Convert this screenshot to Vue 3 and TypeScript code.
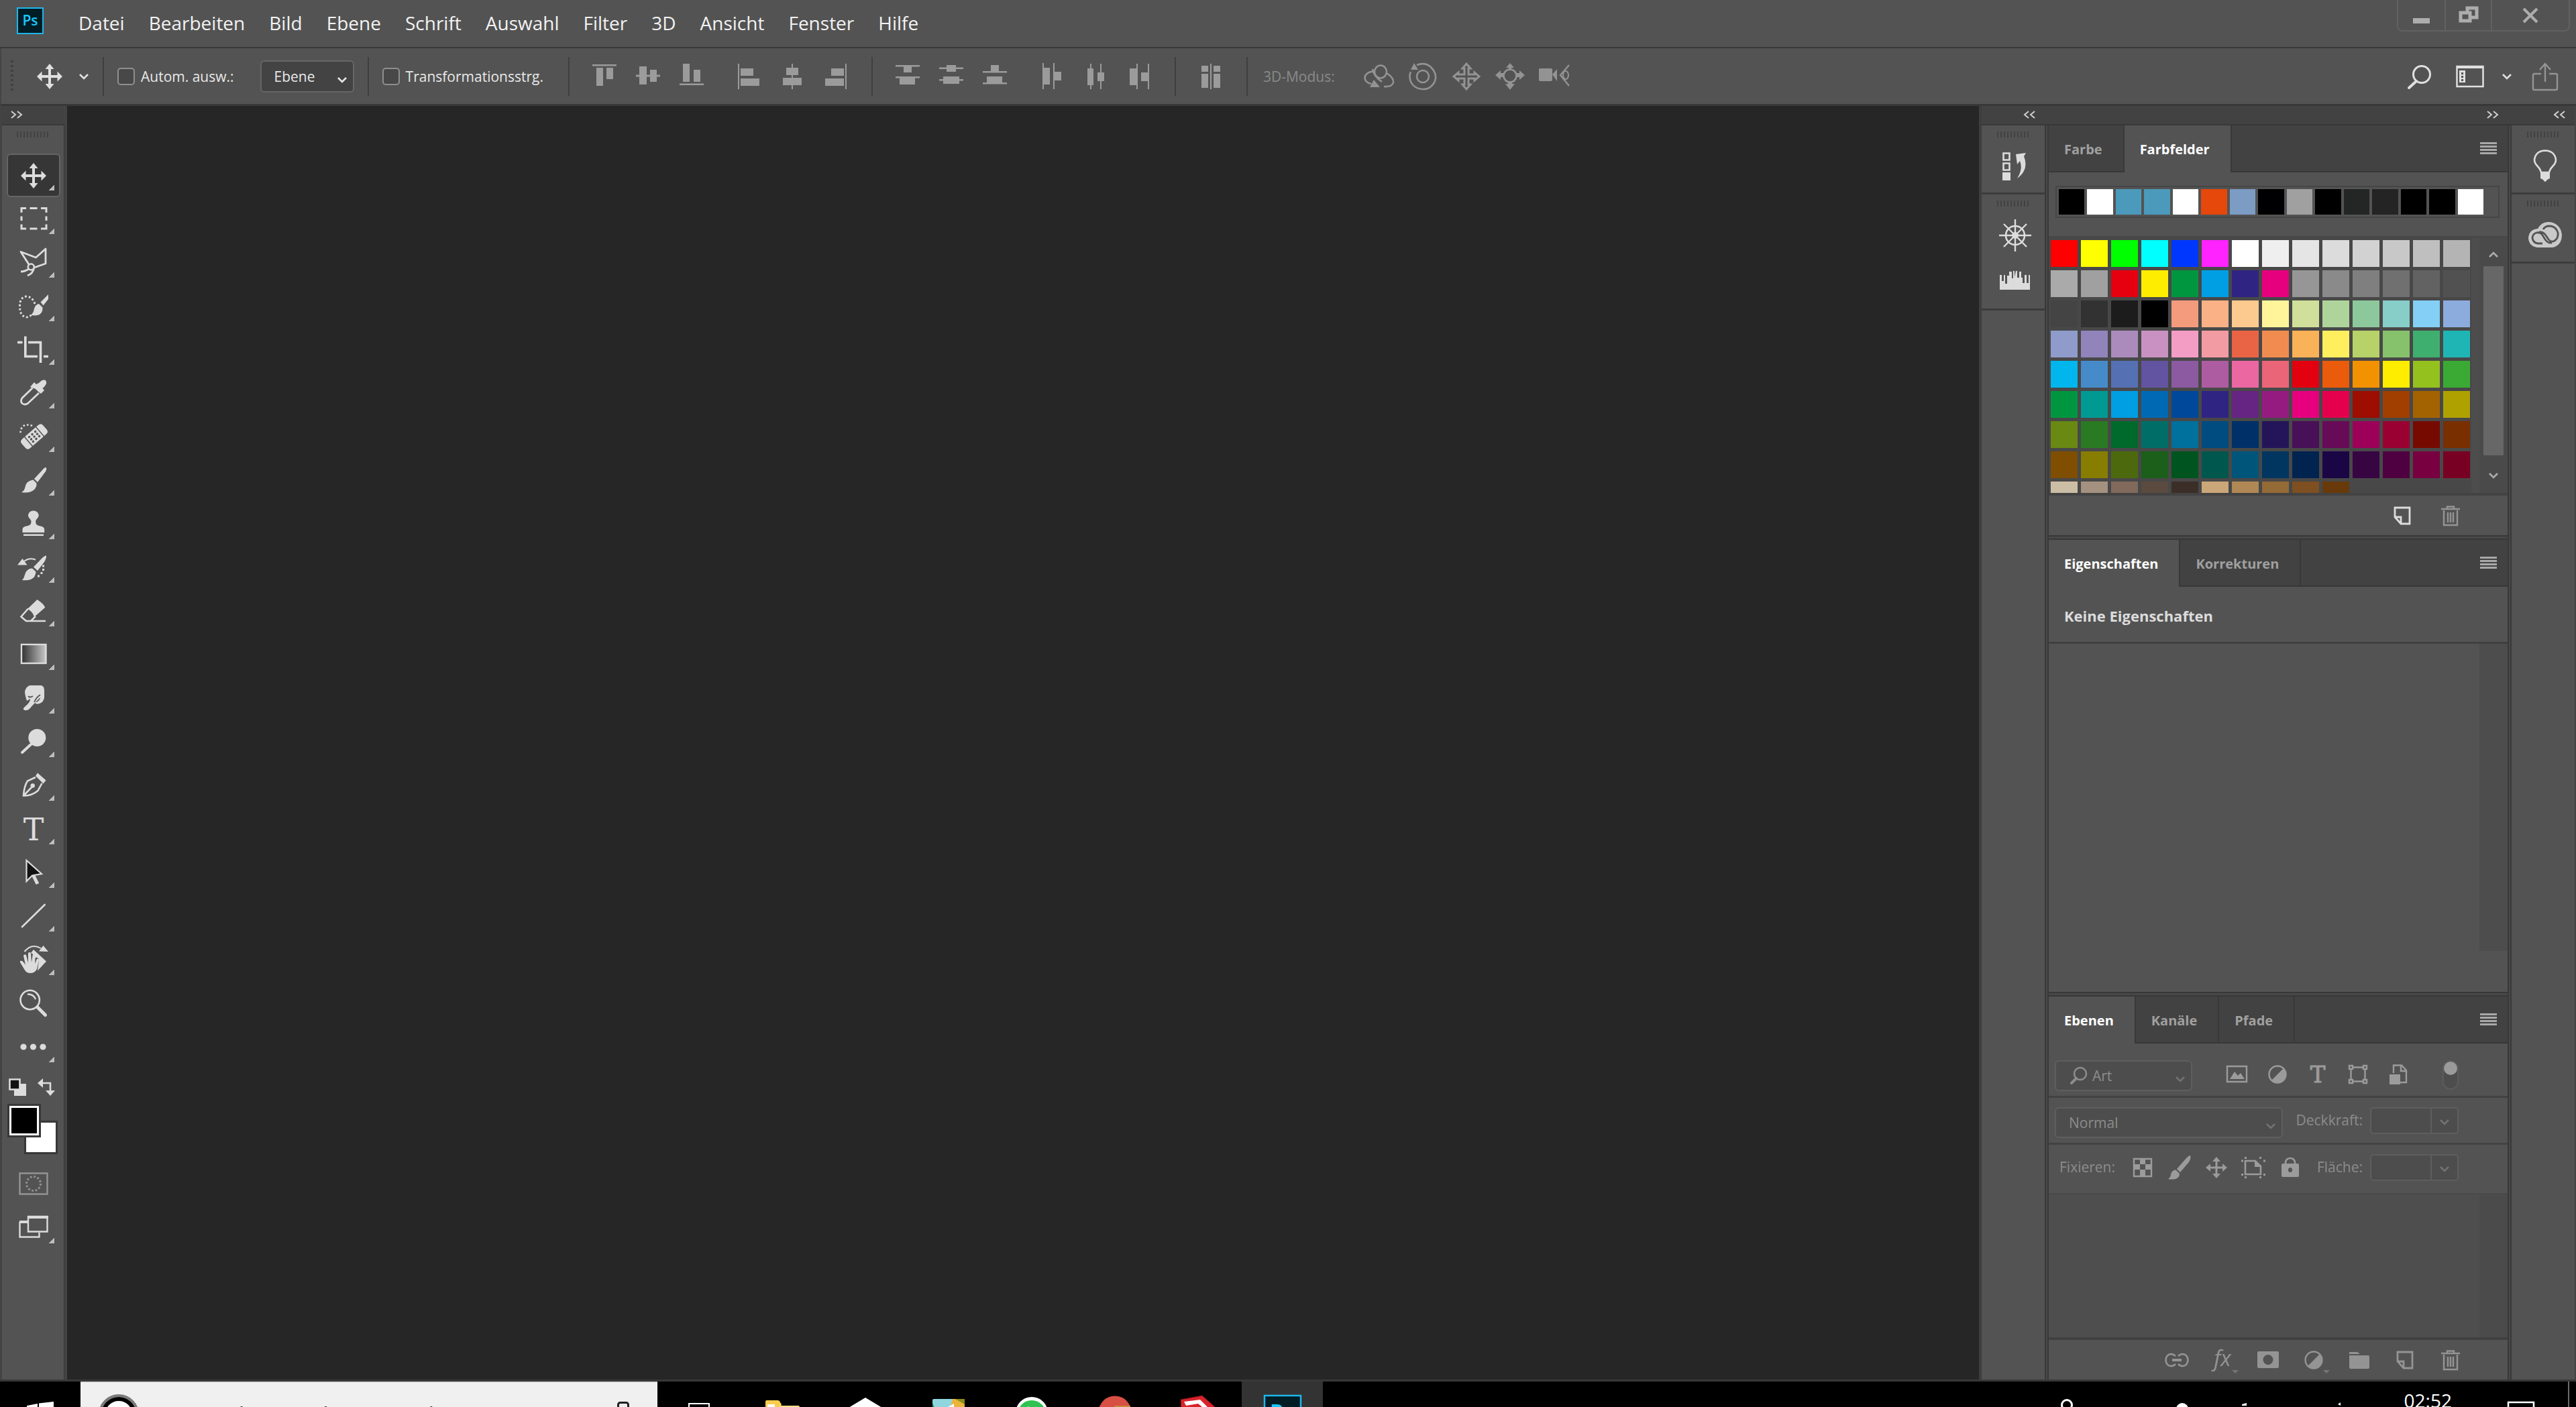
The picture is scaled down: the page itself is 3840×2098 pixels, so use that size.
<script setup lang="ts">
import { ref } from 'vue'

interface Tool {
  id: string
  label: string
  art: string
  more: boolean
}

interface Glyph {
  label: string
  w: number
  h: number
  art: string
  more?: boolean
}

const menus = ['Datei', 'Bearbeiten', 'Bild', 'Ebene', 'Schrift', 'Auswahl', 'Filter', '3D', 'Ansicht', 'Fenster', 'Hilfe']

const cross = '<path d="M25 3l6.500 8h-4.500v9h9.500v-5.500l7.500 7.500-7.500 7.500v-5.500h-9.500v9h4.500l-6.500 8-6.500-8h4.500v-9h-9.500v5.500l-7.500-7.500 7.500-7.500v5.500h9.500v-9h-4.500z" fill="currentColor"/>'
const brush = '<path d="M43.700 2Q45 4 43 8L31 24 26 19 38 6Q41 2 43.700 2zM24.500 20.500L29.500 25.500Q30 32 25 36 18 41 7 39 12 36 12.500 31 14 22 24.500 20.500z" fill="currentColor"/>'

const tools: Tool[] = [
  { id: 'move', label: 'Verschieben', more: true, art: cross },
  { id: 'marquee', label: 'Auswahlrechteck', more: true, art: '<path d="M7 12V5.500h7M19.500 5.500h11M36 5.500h8V12M44 17.500v6.500M44 29.500V36h-8M30.500 36h-11M14 36H7v-6.500M7 24v-6.500" fill="none" stroke="currentColor" stroke-width="3"/>' },
  { id: 'lasso', label: 'Polygon-Lasso', more: true, art: '<path d="M18.500 25L6 5.500 28.500 14 43 1V23L26 29M18 31Q12 35 6 35M25.500 30Q24 38 16 41" fill="none" stroke="currentColor" stroke-width="2.800" stroke-linejoin="round"/><ellipse cx="21.300" cy="28" rx="4.500" ry="4.500" fill="none" stroke="currentColor" stroke-width="2.600"/>' },
  { id: 'quick', label: 'Schnellauswahl', more: true, art: '<path d="M27 18Q23 7 14 7 4.500 8 4.500 22 4.500 36 14 38 19 38 22 34" fill="none" stroke="currentColor" stroke-width="3" stroke-dasharray="2.800 3"/><path d="M47 4V11L39.500 20.500 35.500 15.500zM33 18L38.500 23.500Q39 33 31 35 26 36 21 34.500 25 32 25.500 27 27 19 33 18z" fill="currentColor"/>' },
  { id: 'crop', label: 'Freistellen', more: true, art: '<path d="M1 10.500h7.500M12.800 1.500V31.500H31M17 10.500H35.500V41M40 31.500h7" fill="none" stroke="currentColor" stroke-width="3.600"/>' },
  { id: 'dropper', label: 'Pipette', more: true, art: '<path d="M33 6Q40-1 43.500 3 46 8 38.500 14L41 17 36 22 32 19 28 15 20 12 26 5 29 8z" fill="currentColor"/><path d="M23.500 13.500L8 28.500Q5 33 8 36.500 12 39.500 16.500 36.500L33 21" fill="none" stroke="currentColor" stroke-width="2.800"/>' },
  { id: 'heal', label: 'Bereichsreparatur', more: true, art: '<path d="M23 5Q17 2 10 5 5 9 5.500 18" fill="none" stroke="currentColor" stroke-width="2.600" stroke-dasharray="2.600 3"/><g transform="rotate(-41 26 21)"><path d="M5 17q0-5 5-5h4v18h-4q-5 0-5-5zM47 17q0-5-5-5h-4v18h4q5 0 5-5zM15.500 12h21v18h-21z" fill="currentColor"/><path d="M20 16.500h.1M26 16.500h.1M32 16.500h.1M20 21h.1M26 21h.1M32 21h.1M20 25.500h.1M26 25.500h.1M32 25.500h.1" stroke="#535353" stroke-width="3.400" stroke-linecap="round"/></g>' },
  { id: 'brush', label: 'Pinsel', more: true, art: brush },
  { id: 'stamp', label: 'Kopierstempel', more: true, art: '<path d="M24.700 1.500c5 0 8 3.500 8 7 0 4-4.500 5.500-4.500 9 0 4 1.500 5.500 5 6.500 5 1 8 2 8 6v4H8.500v-4c0-4 3-5 8-6 3.500-1 5-2.500 5-6.500 0-3.500-4.500-5-4.500-9 0-3.500 3-7 7.700-7zM10 36.500h30V39H10z" fill="currentColor"/>' },
  { id: 'history', label: 'Protokollpinsel', more: true, art: '<path d="M43.700 3.500Q45 6 41 13L31 26 25 20.500 36 9Q41 3.500 43.700 3.500zM23 22.500L28.500 27.500Q28 36 21 39 15 41 8 40 11 37 12 32 14 23 23 22.500zM1 17.500L8.500 8 15.500 17.500z" fill="currentColor"/><path d="M11 12Q18 6 28 9.500" fill="none" stroke="currentColor" stroke-width="2"/><path d="M31 34h3M35.500 29.500h3M38 24.500h3M38 19h3" stroke="currentColor" stroke-width="3"/>' },
  { id: 'eraser', label: 'Radiergummi', more: true, art: '<path d="M30.500 4Q42 12 42 16L26 30Q24 22 16 18z" fill="currentColor"/><path d="M17 17.500L6.500 29.500 14 36H43M14 36H21L28 29" fill="none" stroke="currentColor" stroke-width="2.600"/>' },
  { id: 'gradient', label: 'Verlauf', more: true, art: '<defs><linearGradient id="ramp"><stop offset="0" stop-color="#303030"/><stop offset="1" stop-color="#c8c8c8"/></linearGradient></defs><rect x="7" y="6" width="36.500" height="28" fill="url(#ramp)" stroke="currentColor" stroke-width="2.400"/>' },
  { id: 'smudge', label: 'Wischfinger', more: true, art: '<path d="M20 2H36Q41 3 41 9V20Q40 27 34 29 29 31 27 28 35 25 35 20 24 31 19 37 14 41 10 38 9 36 14 32 20 27 20 22L15 25Q11 13 12.500 9 15 3 20 2z" fill="currentColor"/><path d="M35 16Q29 20 26 27M24 18Q19 21 17 18" fill="none" stroke="#535353" stroke-width="1.800"/>' },
  { id: 'dodge', label: 'Abwedler', more: true, art: '<ellipse cx="30.300" cy="15" rx="13" ry="13" fill="currentColor"/><path d="M21 25L8 37" stroke="currentColor" stroke-width="4" stroke-linecap="round"/>' },
  { id: 'pen', label: 'Zeichenstift', more: true, art: '<path d="M31 2.500L43.500 13.500 39.500 18.500 28 7z" fill="currentColor"/><path d="M28 9L16 14.500Q11 22 10 36.500 22 37 31.500 29L37.500 18M10 36.500L23 23" fill="none" stroke="currentColor" stroke-width="2.600"/><circle cx="23.700" cy="21.500" r="3.200" fill="currentColor"/>' },
  { id: 'type', label: 'Text', more: true, art: '<text x="25" y="38" text-anchor="middle" font-family="DejaVu Serif" font-size="46" fill="currentColor">T</text>' },
  { id: 'select', label: 'Pfadauswahl', more: true, art: '<path d="M24.500 25L31 38" stroke="currentColor" stroke-width="5"/><path d="M14.500 3V34L23 25.500 37 23z" fill="#111" stroke="currentColor" stroke-width="2.200"/>' },
  { id: 'line', label: 'Linienzeichner', more: true, art: '<path d="M41.700 4L8 37" stroke="currentColor" stroke-width="2.600" stroke-linecap="round"/>' },
  { id: 'rotate', label: 'Ansichtdrehung', more: true, art: '<path d="M11.500 9Q22-4 36 4" fill="none" stroke="currentColor" stroke-width="2"/><path d="M33 8.500L47 9 39.500 0zM25 6L44 23.500 31 37.500Q32 30 33 21 32 17 27 18L25 13 21 11z" fill="currentColor"/><path d="M5 23Q8 21 11 26L13 29 10 15Q11 12 14 14L17 26V11Q19 9 21 11L22 25 24 12Q26 10 28 13L27 27 30 20Q33 18 33 22L30 35Q27 41 20 41 14 41 11 35L5 25z" fill="currentColor"/>' },
  { id: 'zoom', label: 'Zoom', more: false, art: '<circle cx="19.700" cy="16" r="14.200" fill="none" stroke="currentColor" stroke-width="2.600"/><path d="M16 7.500Q25 7 28 15" fill="none" stroke="currentColor" stroke-width="2.400"/><path d="M31 27L42.500 38.500" stroke="currentColor" stroke-width="5" stroke-linecap="round"/>' },
  { id: 'more', label: 'Symbolleiste bearbeiten', more: true, art: '<circle cx="10" cy="21" r="4.600" fill="currentColor"/><circle cx="24.500" cy="21" r="4.600" fill="currentColor"/><circle cx="39" cy="21" r="4.600" fill="currentColor"/>' },
]
const activeTool = ref('move')

// Each arrangement group sits between two separators in the options bar.
const alignTop: Glyph[] = [
  { label: 'Obere Kanten', w: 36, h: 40, art: '<path d="M0 2h36v2.500H0zM6 7h10v27H6zM21 7h10v17H21z"/>' },
  { label: 'Vertikale Mitten', w: 36, h: 40, art: '<path d="M5 5h11v27H5zM21 10h10v18H21zM0 17.500h36v3H0z"/>' },
  { label: 'Untere Kanten', w: 36, h: 40, art: '<path d="M5 1h10v27H5zM21 10h10v18H21zM0 30.500h36V33H0z"/>' },
]
const alignLeft: Glyph[] = [
  { label: 'Linke Kanten', w: 34, h: 40, art: '<path d="M1 1h2v38H1zM5 8h19v11H5zM5 23h28v11H5z"/>' },
  { label: 'Horizontale Mitten', w: 34, h: 40, art: '<path d="M16 1h2v38h-2zM8 7h18v11H8zM3 22h28v11H3z"/>' },
  { label: 'Rechte Kanten', w: 34, h: 40, art: '<path d="M31 1h2v38h-2zM10 8h19v11H10zM1 23h28v11H1z"/>' },
]
const spreadRows: Glyph[] = [
  { label: 'Obere Kanten verteilen', w: 36, h: 40, art: '<path d="M0 1h36v2.500H0zM12 3h12v9H12zM0 18h36v2.500H0zM6 20h23v10H6z" transform="translate(0 2)"/>' },
  { label: 'Vertikale Mitten verteilen', w: 36, h: 40, art: '<path d="M0 6.500h36V9H0zM11 3h14v10H11zM0 24h36v2.500H0zM6 20h24v11H6z"/>' },
  { label: 'Untere Kanten verteilen', w: 36, h: 40, art: '<path d="M0 12h36v2.500H0zM12 3h12v9H12zM0 29h36v2.500H0zM6 20h23v10H6z"/>' },
]
const spreadCols: Glyph[] = [
  { label: 'Linke Kanten verteilen', w: 30, h: 40, art: '<path d="M1 0h2v39H1zM3 7h9v25H3zM17 0h2v39h-2zM19 13h10v13H19z"/>' },
  { label: 'Horizontale Mitten verteilen', w: 30, h: 40, art: '<path d="M7 1h2v38H7zM3 8h9v25H3zM22 1h2v38h-2zM18 14h10v13H18z"/>' },
  { label: 'Rechte Kanten verteilen', w: 30, h: 40, art: '<path d="M11 1h2v38h-2zM1 8h10v25H1zM28 1h2v38h-2zM18 14h10v13H18z"/>' },
]
const spreadAuto: Glyph[] = [
  { label: 'Ebenen ausrichten', w: 30, h: 40, art: '<path d="M1 4h10v9H1zM19 4h10v9H19zM1 16h10v21H1zM19 16h10v21H19zM14 1h2v38h-2z"/>' },
]
const modes3d: Glyph[] = [
  { label: '3D-Drehen', w: 46, h: 40, art: '<ellipse cx="25" cy="13" rx="9" ry="9.500" fill="none" stroke="currentColor" stroke-width="2.600"/><path d="M15 12Q2 14 1.500 22 2 29 11 31M34 15Q45 22 44 29 42 36 30 35M13 9Q15 20 27 28" fill="none" stroke="currentColor" stroke-width="2.600"/><path d="M9 36h15L15 25z"/>' },
  { label: '3D-Rollen', w: 42, h: 42, art: '<circle cx="21" cy="21" r="9" fill="none" stroke="currentColor" stroke-width="2.600"/><path d="M12 4Q24-1 33 7 43 17 39 28 33 41 20 40 8 39 3 29 0 20 3 14" fill="none" stroke="currentColor" stroke-width="2.600"/><path d="M3 11L14 11 8 1z"/>' },
  { label: '3D-Ziehen', w: 42, h: 42, art: '<path d="M21 2l6 7h-3v9h9v-3l7 6-7 6v-3h-9v9h3l-6 7-6-7h3v-9H9v3l-7-6 7-6v3h9V9h-3z" fill="none" stroke="currentColor" stroke-width="3"/>' },
  { label: '3D-Gleiten', w: 44, h: 42, art: '<circle cx="22" cy="20" r="9.500" fill="none" stroke="currentColor" stroke-width="2.600"/><path d="M22 1l6 7h-4v4h-4V8h-4zM22 41l-7-9h4v-4h6v4h4zM0 19l8-7v4h4v6H8v4zM44 19l-8-7v4h-4v6h4v4z"/>' },
  { label: '3D-Kamera', w: 46, h: 40, art: '<path d="M1 9q0-1 2-1h16q2 0 2 2v15q0 2-2 2H3q-2 0-2-2zM21 17l7-8v18z"/><path d="M46 3L33 18 46 34" fill="none" stroke="currentColor" stroke-width="2.400"/><ellipse cx="41" cy="18" rx="4" ry="6" fill="none" stroke="currentColor" stroke-width="2"/>' },
]

const recent = ['#000000', '#ffffff', '#4c9abb', '#4c9abb', '#ffffff', '#e6470b', '#7d9cc4', '#000003', '#a0a0a0', '#000000', '#242625', '#242424', '#000000', '#000000', '#ffffff']
const swatches = `
ff0000 ffff00 00ff00 00ffff 0037ff ff23ff ffffff efefef e5e5e5 dcdcdc d2d2d2 c8c8c8 bfbfbf b4b4b4
aaaaaa a0a0a0 e6000f ffed00 009640 009fe3 302482 e6007e 969696 8a8a8a 7f7f7f 707070 626262 515151
444444 323232 1c1c1c 000000 f49a7d f9b185 fcca8e fff49a d0e09a aed49c 8dc79c 87cdc8 83cff5 8cacdd
8e9bcb 9084bb ab8bbc c891c1 f39dc4 f39ba2 e96445 f18c50 f9b257 ffef5f b6d268 86c26c 3faf6f 1fb5b4
00b6ed 468bc9 5670b4 6254a0 8b5aa0 ad5ca1 eb67a1 ea6577 e3000f ea5b0c f39200 ffed00 95c11f 3aaa35
009640 009a93 009ee3 0069b4 00489a 302483 662483 951b81 e6007e e5004d 9d0d00 a03f00 a36300 aea100
698912 297a22 006a2c 006e66 00709d 004b80 003068 241559 481057 670b58 9d0059 9b0033 770a00 7a2f00
7f4e00 877d00 4c6a0d 1b5f1a 00541f 00574d 00557a 00365f 002350 1b0645 370542 4f0041 780040 780023
ccbda5 a4917f 816a5b 5b4a40 3b2e28 cba678 b08855 946a36 7e4f20 683a0a`.trim().split(/\s+/)

const kinds: Glyph[] = [
  { label: 'Pixelebenen', w: 32, h: 28, art: '<path d="M1 2h29v23H1z" fill="none" stroke="currentColor" stroke-width="2.400"/><path d="M5 21l7-11 5 6 4-4 6 9z"/>' },
  { label: 'Einstellungsebenen', w: 28, h: 28, art: '<circle cx="14" cy="14" r="12.500" fill="none" stroke="currentColor" stroke-width="2.400"/><path d="M23 5A12.500 12.500 0 0 1 5 23z"/>' },
  { label: 'Textebenen', w: 32, h: 30, art: '<text x="16" y="27" text-anchor="middle" font-family="DejaVu Serif" font-size="34" stroke="currentColor">T</text>' },
  { label: 'Formebenen', w: 30, h: 30, art: '<path d="M2 2h5v5H2zM23 2h5v5h-5zM2 23h5v5H2zM23 23h5v5h-5zM7 4.500h16M7 25.500h16M4.500 7v16M25.500 7v16" fill="none" stroke="currentColor" stroke-width="2.400"/>' },
  { label: 'Smartobjekte', w: 28, h: 32, art: '<path d="M7 14V2.500h12l7 7.500v18h-9M18 3v8h8" fill="none" stroke="currentColor" stroke-width="2.400"/><path d="M1 16h16v15H1z"/>' },
]
const locks: Glyph[] = [
  { label: 'Transparente Pixel', w: 30, h: 30, art: '<path d="M2 2h26v26H2z" fill="none" stroke="currentColor" stroke-width="2.400"/><path d="M11 2h8v8h-8zM2 10h9v8H2zM19 10h9v8h-9zM11 18h8v10h-8z"/>' },
  { label: 'Bildpixel', w: 34, h: 36, art: '<path d="M33 0Q35 4 30 11L18 25 13 20 27 4Q31 0 33 0zM11.500 21.500L17 27Q17 33 11 35 5 36 0 35 4 32 4 28 6 21 11.500 21.500z"/>' },
  { label: 'Position', w: 34, h: 34, art: '<path d="M17 1l6 7h-4.500v7.500H26V11l7 6-7 6v-4.500h-7.500V26H23l-6 7-6-7h4.500v-7.500H8V23l-7-6 7-6v4.500h7.500V8H11z"/>' },
  { label: 'Zeichenfläche', w: 36, h: 32, art: '<path d="M6 6h15l8 8v12H6z" fill="none" stroke="currentColor" stroke-width="2.600"/><path d="M20 5v10h10zM0 4.500h3v3H0zM0 25h3v3H0zM33 4.500h3v3h-3zM33 25h3v3h-3zM5 0h3v3H5zM27 0h3v3h-3zM5 29h3v3H5zM27 29h3v3h-3z"/>' },
  { label: 'Alle sperren', w: 28, h: 32, art: '<path d="M1 12q0-2 2-2h22q2 0 2 2v16q0 2-2 2H3q-2 0-2-2z"/><path d="M7 11V8Q8 2 14 2t7 6v3" fill="none" stroke="currentColor" stroke-width="2.600"/><ellipse cx="14" cy="19.500" rx="3" ry="3.500" fill="#535353"/>' },
]
const pageArt = '<path d="M2 2h22v24H11L2 16zM2 16h9v10" fill="none" stroke="currentColor" stroke-width="2.800"/>'
const trashArt = '<path d="M0 6h28M9 6V2.500h10V6M4 8v22h20V8M10 11v15M14 11v15M18 11v15" fill="none" stroke="currentColor" stroke-width="2.400"/>'
const layerActions: Glyph[] = [
  { label: 'Verknüpfen', w: 36, h: 22, art: '<path d="M16 5Q13 2 9 2 2 3 1.500 11 2 19 9 20q4 0 7-3M20 5q3-3 7-3 7 1 7.500 9-.5 8-7.500 9-4 0-7-3" fill="none" stroke="currentColor" stroke-width="2.600"/><path d="M11 9h14v4H11z"/>' },
  { label: 'Ebenenstil', w: 34, h: 36, more: true, art: '<text x="17" y="27" text-anchor="middle" font-family="Open Sans" font-size="32" font-style="italic">fx</text>' },
  { label: 'Maske', w: 32, h: 26, art: '<path fill-rule="evenodd" d="M2 0h28q2 0 2 2v21q0 2-2 2H2q-2 0-2-2V2q0-2 2-2zM16 5a7.500 7.500 0 1 0 0 15 7.500 7.500 0 1 0 0-15z"/>' },
  { label: 'Einstellungsebene', w: 28, h: 28, more: true, art: '<circle cx="14" cy="14" r="12.500" fill="none" stroke="currentColor" stroke-width="2.400"/><path d="M23 5A12.500 12.500 0 0 1 5 23z"/>' },
  { label: 'Gruppe', w: 30, h: 26, art: '<path d="M0 1h12l4 3H0zM0 6h28q2 0 2 2v16q0 2-2 2H2q-2 0-2-2z"/>' },
  { label: 'Neue Ebene', w: 26, h: 28, art: pageArt },
  { label: 'Ebene löschen', w: 28, h: 32, art: trashArt },
]

const taskIcons: Glyph[] = [
  { label: 'Aktive Anwendungen', w: 60, h: 60, art: '<path d="M15 13h30v30H15z" fill="none" stroke="#fff" stroke-width="2"/>' },
  { label: 'Explorer', w: 60, h: 60, art: '<path d="M5 10q0-2 2-2h16q3 0 4 3l2 3-2 6H5z" fill="#f9cd4e"/><path d="M27 16h27q2 0 2 2v30H5V20h20z" fill="#fde089"/><path d="M8 14h11v4H8z" fill="#fff"/>' },
  { label: 'Dropbox', w: 60, h: 60, art: '<path d="M30 4L60 22v20H0V22z" fill="#fff"/>' },
  { label: 'Notizen', w: 60, h: 60, art: '<path d="M6 8q0-2 2-2h42q4 0 4 4v40H6z" fill="#8fd6de"/><path d="M36 6h14q4 0 4 4v40H24z" fill="#e9b53a"/><path d="M40 6h14v8z" fill="#8c8b1e"/><path d="M6 12l8 18H6z" fill="#1e8f80"/><path d="M38 13v10H20z" fill="#fff"/>' },
  { label: 'WhatsApp', w: 60, h: 60, art: '<circle cx="30" cy="27" r="24" fill="#fff"/><circle cx="30" cy="29" r="21" fill="#2fc251"/><path d="M21 20l4-3 3 3z" fill="#fff"/>' },
  { label: 'Chrome', w: 60, h: 60, art: '<circle cx="30" cy="26" r="24.500" fill="#d84f43"/><path d="M30 16h23v4H28z" fill="#c98a3b"/>' },
  { label: 'SketchUp', w: 60, h: 60, art: '<path d="M4 7L36 1 54 17V40H6z" fill="#d8232b" stroke="#7a1317"/><path d="M9 10L33 7 44 18H36L30 13 12 16z" fill="#fff"/>' },
]

const chevDown = 'M2 2l6 6 6-6'
</script>

<template>
  <div class="app">
    <header class="menubar">
      <svg class="logo" width="40" height="40" viewBox="0 0 40 40" role="img" aria-label="Photoshop">
        <rect x="1" y="1" width="38" height="38" fill="#001d26" stroke="#1fb6ea" stroke-width="2" />
        <text x="20" y="27" text-anchor="middle" font-family="Open Sans" font-size="21" font-weight="600" fill="#19c8fb">Ps</text>
      </svg>
      <nav class="menus">
        <button v-for="m in menus" :key="m" type="button">{{ m }}</button>
      </nav>
      <div class="window-buttons">
        <button type="button" class="wb-min" aria-label="Minimieren"><svg width="26" height="28" viewBox="0 0 26 28"><path d="M0 18h25v8H0z" fill="#adadad" /></svg></button>
        <button type="button" class="wb-restore" aria-label="Verkleinern"><svg width="30" height="28" viewBox="0 0 30 28"><path d="M13 9V3h14v14h-8M3 10h14v12H3z" fill="none" stroke="#adadad" stroke-width="5" /></svg></button>
        <button type="button" class="wb-close" aria-label="Schließen"><svg width="26" height="28" viewBox="0 0 26 28"><path d="M3 4L23 24M23 4L3 24" stroke="#adadad" stroke-width="4" /></svg></button>
      </div>
    </header>

    <section class="options">
      <span class="grip-v"></span>
      <button type="button" class="preset" aria-label="Werkzeugvorgabe">
        <svg width="50" height="44" viewBox="0 0 50 44" v-html="cross"></svg>
        <svg class="chev" width="16" height="10" viewBox="0 0 16 10"><path :d="chevDown" /></svg>
      </button>
      <span class="sep"></span>
      <label class="check"><input type="checkbox" />Autom. ausw.:</label>
      <span class="select select-target">
        <select aria-label="Automatisch auswählen"><option>Ebene</option></select>
        <svg class="chev" width="16" height="10" viewBox="0 0 16 10"><path :d="chevDown" /></svg>
      </span>
      <span class="sep"></span>
      <label class="check"><input type="checkbox" />Transformationsstrg.</label>
      <span class="sep"></span>
      <div class="glyphs paired">
        <div v-for="(g, i) in [alignTop, alignLeft]" :key="i" class="glyphs">
          <button v-for="a in g" :key="a.label" type="button" :aria-label="a.label"><svg :width="a.w" :height="a.h" :viewBox="`0 0 ${a.w} ${a.h}`" v-html="a.art"></svg></button>
        </div>
      </div>
      <span class="sep"></span>
      <div class="glyphs paired">
        <div v-for="(g, i) in [spreadRows, spreadCols]" :key="i" class="glyphs">
          <button v-for="a in g" :key="a.label" type="button" :aria-label="a.label"><svg :width="a.w" :height="a.h" :viewBox="`0 0 ${a.w} ${a.h}`" v-html="a.art"></svg></button>
        </div>
      </div>
      <span class="sep"></span>
      <div class="glyphs">
        <button v-for="a in spreadAuto" :key="a.label" type="button" :aria-label="a.label"><svg :width="a.w" :height="a.h" :viewBox="`0 0 ${a.w} ${a.h}`" v-html="a.art"></svg></button>
      </div>
      <span class="sep"></span>
      <span class="mode-label">3D-Modus:</span>
      <div class="glyphs dim">
        <button v-for="a in modes3d" :key="a.label" type="button" :aria-label="a.label"><svg :width="a.w" :height="a.h" :viewBox="`0 0 ${a.w} ${a.h}`" v-html="a.art"></svg></button>
      </div>
      <div class="options-end">
        <button type="button" aria-label="Suchen"><svg width="38" height="38" viewBox="0 0 38 38"><circle cx="23" cy="16" r="12.500" fill="none" stroke="currentColor" stroke-width="3" /><path d="M15 26L4 36" stroke="currentColor" stroke-width="4" stroke-linecap="round" /></svg></button>
        <button type="button" class="workspace" aria-label="Arbeitsbereich">
          <svg width="42" height="34" viewBox="0 0 42 34"><path d="M1.500 2h39v30h-39z" fill="none" stroke="currentColor" stroke-width="2.500" /><path d="M1 1h40v4H1zM5 8h9v18H5z" fill="currentColor" /><path d="M8 11h3v3H8zM8 16h3v3H8zM8 21h3v3H8z" fill="#535353" /></svg>
          <svg class="chev" width="16" height="10" viewBox="0 0 16 10"><path :d="chevDown" /></svg>
        </button>
        <button type="button" class="share" aria-label="Bereitstellen"><svg width="40" height="42" viewBox="0 0 40 42"><path d="M14 17H4q-2 0-2 2v20q0 2 2 2h32q2 0 2-2V19q0-2-2-2H26M20 29V3M12 11l8-9 8 9" fill="none" stroke="currentColor" stroke-width="2.400" /></svg></button>
      </div>
    </section>

    <div class="workspace-row">
      <aside class="toolbar">
        <button type="button" class="collapse left" aria-label="Erweitern"><svg width="20" height="14" viewBox="0 0 20 14"><path d="M2 2l6 5-6 5M11 2l6 5-6 5" /></svg></button>
        <div class="tool-body">
          <span class="grip-h"></span>
          <div class="tools">
            <button v-for="t in tools" :key="t.id" type="button" :class="['tool', { active: t.id === activeTool }]" :aria-label="t.label" @click="activeTool = t.id">
              <svg width="50" height="44" viewBox="0 0 50 44" v-html="t.art"></svg>
              <i v-if="t.more" class="corner"></i>
            </button>
          </div>
          <div class="color-reset">
            <button type="button" aria-label="Standardfarben"><svg width="26" height="26" viewBox="0 0 26 26"><path d="M8 8h18v18H8z" fill="#dcdcdc" /><path d="M1.500 1.500h15v15h-15z" fill="#111" stroke="#dcdcdc" stroke-width="2.600" /></svg></button>
            <button type="button" aria-label="Farben tauschen"><svg width="26" height="26" viewBox="0 0 26 26"><path d="M6 7h13v13" fill="none" stroke="#dcdcdc" stroke-width="2.600" /><path d="M0 7l8-7v14zM12 18h14l-7 8z" fill="#dcdcdc" /></svg></button>
          </div>
          <div class="colors">
            <button type="button" class="bg-color" aria-label="Hintergrundfarbe"></button>
            <button type="button" class="fg-color" aria-label="Vordergrundfarbe"></button>
          </div>
          <button type="button" class="mode" aria-label="Maskierungsmodus"><svg width="44" height="34" viewBox="0 0 44 34"><path d="M1.500 1.500h41v31h-41z" fill="none" stroke="#949494" stroke-width="2.400" /><circle cx="22" cy="17" r="10.500" fill="none" stroke="#949494" stroke-width="3" stroke-dasharray="2.700 2.800" /></svg></button>
          <button type="button" class="mode" aria-label="Bildschirmmodus">
            <svg width="44" height="34" viewBox="0 0 44 34"><path d="M1.500 10v22.500h29V26M1 10h12" fill="none" stroke="#dcdcdc" stroke-width="2.400" /><path d="M1 8h12v4H1zM13 1h31v4H13z" fill="#dcdcdc" /><path d="M14 2h28.500v22.500H14z" fill="none" stroke="#dcdcdc" stroke-width="2.400" /></svg>
            <i class="corner"></i>
          </button>
        </div>
      </aside>

      <main class="canvas"></main>

      <aside class="dock">
        <div class="dock-head">
          <button type="button" class="collapse head-strip" aria-label="Erweitern"><svg width="20" height="14" viewBox="0 0 20 14"><path d="M8 2L2 7l6 5M17 2l-6 5 6 5" /></svg></button>
          <button type="button" class="collapse head-panels" aria-label="Reduzieren"><svg width="20" height="14" viewBox="0 0 20 14"><path d="M2 2l6 5-6 5M11 2l6 5-6 5" /></svg></button>
          <button type="button" class="collapse head-strip" aria-label="Erweitern"><svg width="20" height="14" viewBox="0 0 20 14"><path d="M8 2L2 7l6 5M17 2l-6 5 6 5" /></svg></button>
        </div>
        <div class="dock-body">
          <div class="strip">
            <div class="strip-group single">
              <span class="grip-h"></span>
              <button type="button" aria-label="Protokoll"><svg width="50" height="50" viewBox="0 0 50 50"><path d="M7.500 5.500h9v10h-9zM7.500 20.500h9v10h-9z" fill="none" stroke="currentColor" stroke-width="2.600" /><path d="M6 34h12v12H6zM26 7l15-2-3 5Q46 30 28 43 37 29 32 17l-4 5z" fill="currentColor" /></svg></button>
            </div>
            <div class="strip-group">
              <span class="grip-h"></span>
              <button type="button" aria-label="Navigator"><svg width="50" height="50" viewBox="0 0 50 50"><circle cx="25" cy="25" r="14" fill="none" stroke="currentColor" stroke-width="2.600" /><circle cx="25" cy="25" r="5" fill="currentColor" /><path d="M25 1v48M1 25h48M8 8l34 34M42 8L8 42" stroke="currentColor" stroke-width="2.400" /></svg></button>
              <button type="button" class="spaced" aria-label="Histogramm"><svg width="50" height="50" viewBox="0 0 50 50"><path d="M2 39V17h3v9h3V17h2v13h3V18h3v-6h4v10h2V11h2v9l2-9h2v10h3v-9h3v9h2v8h3V17h3v12h3V17h2v22z" fill="currentColor" /></svg></button>
            </div>
          </div>

          <div class="panels">
            <section class="panel">
              <div class="tabs">
                <button type="button" class="tab">Farbe</button>
                <button type="button" class="tab on">Farbfelder</button>
                <button type="button" class="tab-fill" aria-label="Bedienfeldmenü"><i class="burger"></i></button>
              </div>
              <div class="recent">
                <span v-for="(c, i) in recent" :key="i" :style="{ background: c }"></span>
              </div>
              <div class="swatch-area">
                <div class="swatches">
                  <span v-for="(c, i) in swatches" :key="i" :style="{ background: '#' + c }"></span>
                </div>
                <div class="scroller">
                  <svg class="chev" width="16" height="10" viewBox="0 0 16 10"><path d="M2 8l6-6 6 6" /></svg>
                  <span class="thumb"></span>
                  <svg class="chev" width="16" height="10" viewBox="0 0 16 10"><path :d="chevDown" /></svg>
                </div>
              </div>
              <div class="panel-foot">
                <button type="button" class="bright" aria-label="Neues Farbfeld"><svg width="26" height="28" viewBox="0 0 26 28" v-html="pageArt"></svg></button>
                <button type="button" aria-label="Farbfeld löschen"><svg width="28" height="32" viewBox="0 0 28 32" v-html="trashArt"></svg></button>
              </div>
            </section>

            <section class="panel">
              <div class="tabs">
                <button type="button" class="tab on">Eigenschaften</button>
                <button type="button" class="tab">Korrekturen</button>
                <button type="button" class="tab-fill" aria-label="Bedienfeldmenü"><i class="burger"></i></button>
              </div>
              <h2 class="props-title">Keine Eigenschaften</h2>
              <div class="props-body"><span class="track"></span></div>
            </section>

            <section class="panel layers">
              <div class="tabs">
                <button type="button" class="tab on">Ebenen</button>
                <button type="button" class="tab">Kanäle</button>
                <button type="button" class="tab">Pfade</button>
                <button type="button" class="tab-fill" aria-label="Bedienfeldmenü"><i class="burger"></i></button>
              </div>
              <div class="row filter-row">
                <span class="select muted select-kind">
                  <svg class="lens" width="26" height="28" viewBox="0 0 26 28"><circle cx="16" cy="11" r="9" fill="none" stroke="#8c8c8c" stroke-width="2.600" /><path d="M10 18L3 25" stroke="#8c8c8c" stroke-width="4" stroke-linecap="round" /></svg>
                  <select aria-label="Filterart"><option>Art</option></select>
                  <svg class="chev" width="16" height="10" viewBox="0 0 16 10"><path :d="chevDown" /></svg>
                </span>
                <div class="kinds">
                  <button v-for="a in kinds" :key="a.label" type="button" :aria-label="a.label"><svg :width="a.w" :height="a.h" :viewBox="`0 0 ${a.w} ${a.h}`" v-html="a.art"></svg></button>
                </div>
                <button type="button" class="switch" aria-label="Filter ein/aus"><i></i></button>
              </div>
              <div class="row blend-row">
                <span class="select muted select-blend">
                  <select aria-label="Füllmethode"><option>Normal</option></select>
                  <svg class="chev" width="16" height="10" viewBox="0 0 16 10"><path :d="chevDown" /></svg>
                </span>
                <div class="amount">
                  <label for="opacity">Deckkraft:</label>
                  <span class="amount-box"><input id="opacity" type="text" /><button type="button" aria-label="Deckkraft wählen"><svg class="chev" width="16" height="10" viewBox="0 0 16 10"><path :d="chevDown" /></svg></button></span>
                </div>
              </div>
              <div class="row lock-row">
                <span class="lock-label">Fixieren:</span>
                <div class="locks">
                  <button v-for="a in locks" :key="a.label" type="button" :aria-label="a.label"><svg :width="a.w" :height="a.h" :viewBox="`0 0 ${a.w} ${a.h}`" v-html="a.art"></svg></button>
                </div>
                <div class="amount">
                  <label for="fill">Fläche:</label>
                  <span class="amount-box"><input id="fill" type="text" /><button type="button" aria-label="Fläche wählen"><svg class="chev" width="16" height="10" viewBox="0 0 16 10"><path :d="chevDown" /></svg></button></span>
                </div>
              </div>
              <div class="layer-list"><span class="track"></span></div>
              <div class="panel-foot layer-foot">
                <button v-for="a in layerActions" :key="a.label" type="button" :aria-label="a.label">
                  <svg :width="a.w" :height="a.h" :viewBox="`0 0 ${a.w} ${a.h}`" v-html="a.art"></svg>
                  <i v-if="a.more" class="drop"></i>
                </button>
              </div>
            </section>
          </div>

          <div class="strip">
            <div class="strip-group single">
              <span class="grip-h"></span>
              <button type="button" aria-label="Lernen"><svg width="50" height="50" viewBox="0 0 50 50"><path d="M19 34Q18 29 13 24 9 20 9 15 11 2 25 1.500 39 2 41 15q0 5-4 9-5 5-6 10z" fill="none" stroke="currentColor" stroke-width="2.600" /><path d="M18 34h14v9l-4 2q-3 6-6 0l-4-2z" fill="currentColor" /></svg></button>
            </div>
            <div class="strip-group single">
              <span class="grip-h"></span>
              <button type="button" aria-label="Bibliotheken"><svg width="54" height="50" viewBox="0 0 54 50"><path d="M15 43Q3 41 2 29 3 16 16 15 22 4 33 5 50 7 52 24 52 40 38 43z" fill="#c9c9c9" /><path d="M37 36Q31 37 27 31L22 23Q18 20 14 21 8 23 8 29 9 36 16 37H23M18 20Q24 19 28 25L32 31Q36 36 41 33 47 29 46 21 43 11 33 11 27 11 24 16" fill="none" stroke="#535353" stroke-width="2.800" /></svg></button>
            </div>
          </div>
        </div>
      </aside>
    </div>

    <footer class="taskbar">
      <button type="button" class="start" aria-label="Start"><svg width="40" height="40" viewBox="0 0 40 40"><path d="M0 6L16 3V20H0zM18 2.500L40 0V20H18z" fill="#fff" /></svg></button>
      <div class="search">
        <svg width="60" height="60" viewBox="0 0 60 60"><circle cx="30" cy="30" r="28" fill="none" stroke="#7a7a7a" stroke-width="4" /><circle cx="30" cy="30" r="23" fill="#fff" stroke="#000" stroke-width="6" /></svg>
        <input type="search" aria-label="Suche" placeholder="Zur Suche Text hier eingeben" />
        <svg class="mic" width="18" height="40" viewBox="0 0 18 40"><rect x="1.500" y="1.500" width="15" height="30" rx="3" fill="none" stroke="#222" stroke-width="3" /></svg>
      </div>
      <div class="apps">
        <button v-for="a in taskIcons" :key="a.label" type="button" :aria-label="a.label"><svg :width="a.w" :height="a.h" :viewBox="`0 0 ${a.w} ${a.h}`" v-html="a.art"></svg></button>
        <button type="button" class="current" aria-label="Photoshop"><svg width="60" height="60" viewBox="0 0 60 60"><rect x="3" y="1" width="54" height="54" fill="#001d26" stroke="#1fb6ea" stroke-width="2.500" /><text x="29" y="37" text-anchor="middle" font-family="Open Sans" font-size="32" font-weight="700" fill="#19c8fb">Ps</text></svg></button>
      </div>
      <div class="tray">
        <svg width="430" height="40" viewBox="0 0 430 40"><circle cx="10" cy="25" r="7.500" fill="none" stroke="#fff" stroke-width="3" /><circle cx="182" cy="31" r="9" fill="#fff" /><path d="M271 24l7-2v4h-7zM414 24l4-3v5z" fill="#fff" /></svg>
        <time>02:52</time>
        <svg class="note" width="40" height="40" viewBox="0 0 40 40"><path d="M1 1h38v30H1z" fill="none" stroke="#fff" stroke-width="2.500" /></svg>
        <span class="show-desktop"></span>
      </div>
    </footer>
  </div>
</template>

<style>
body {
  margin: 0;
  background: #262626;
}
</style>

<style scoped>
.app {
  display: flex;
  flex-direction: column;
  height: 100vh;
  overflow: hidden;
  background: #535353;
  color: #dcdcdc;
  font-family: "Open Sans", "Noto Sans", sans-serif;
  font-size: 21px;
  line-height: 28px;
}
.app * {
  box-sizing: border-box;
}
button,
input,
select {
  margin: 0;
  padding: 0;
  border: 0;
  background: none;
  color: inherit;
  font: inherit;
  appearance: none;
}
button {
  display: flex;
  align-items: center;
  justify-content: center;
}
svg {
  display: block;
  flex: none;
  overflow: visible;
}
.chev path {
  fill: none;
  stroke: currentColor;
  stroke-width: 2.6;
}

/* menu bar */
.menubar {
  display: flex;
  flex: none;
  align-items: flex-start;
  height: 72px;
  padding: 0 9px 0 25px;
  border-bottom: 2px solid #3a3a3a;
}
.logo {
  margin-top: 11px;
}
.menus {
  display: flex;
  gap: 36px;
  margin: 15px 0 0 52px;
  color: #f2f2f2;
  font-size: 28px;
  line-height: 38px;
}
.window-buttons {
  display: flex;
  height: 47px;
  margin-left: auto;
  border: 2px solid #616161;
  border-top: 0;
  border-radius: 0 0 8px 8px;
}
.window-buttons button + button {
  border-left: 2px solid #616161;
}
.wb-min,
.wb-restore {
  width: 69px;
}
.wb-close {
  width: 116px;
}

/* options bar */
.options {
  display: flex;
  flex: none;
  align-items: center;
  height: 86px;
  padding: 0 26px 0 14px;
  border-bottom: 3px solid #383838;
  border-left: 2px solid #454545;
  color: #e8e8e8;
}
.grip-v {
  width: 4px;
  height: 48px;
  background: repeating-linear-gradient(#404040 0 3px, transparent 3px 7px);
}
.preset {
  gap: 18px;
  margin-left: 29px;
  color: #e0e0e0;
}
.sep {
  width: 2px;
  height: 58px;
  margin: 0 20px;
  background: #3f3f3f;
}
.check {
  display: flex;
  align-items: center;
  gap: 9px;
  margin-right: 17px;
}
.check input {
  width: 26px;
  height: 26px;
  border: 2px solid #8f8f8f;
  border-radius: 5px;
  background: #484848;
}
.select {
  position: relative;
  display: flex;
  align-items: center;
  height: 48px;
  border: 2px solid #666;
  border-radius: 6px;
  background: #434343;
}
.select select {
  width: 100%;
  height: 100%;
  padding-left: 19px;
}
.select .chev {
  position: absolute;
  top: 50%;
  right: 8px;
}
.select-target {
  width: 140px;
  margin-left: 22px;
}
.glyphs {
  display: flex;
  color: #9b9b9b;
}
.paired {
  gap: 20px;
}
.glyphs button {
  width: 65px;
  height: 44px;
}
.glyphs svg,
.kinds svg,
.locks svg,
.panel-foot svg {
  fill: currentColor;
}
.dim {
  margin-left: 34px;
  color: #939393;
}
.mode-label {
  margin-left: 3px;
  color: #8a8a8a;
}
.options-end {
  display: flex;
  align-items: center;
  gap: 29px;
  margin-left: auto;
  color: #e0e0e0;
}
.workspace {
  gap: 26px;
  margin-left: 7px;
}
.share {
  color: #949494;
}

/* body */
.workspace-row {
  display: flex;
  flex: 1;
  min-height: 0;
  border-bottom: 3px solid #383838;
}
.canvas {
  flex: 1;
  background: #262626;
}
.collapse {
  height: 27px;
  padding-bottom: 2px;
  background: #424242;
}
.collapse svg {
  fill: none;
  stroke: #d0d0d0;
  stroke-width: 2;
}
.grip-h {
  display: block;
  width: 48px;
  height: 9px;
  margin: 9px auto 0;
  background: repeating-linear-gradient(90deg, #424242 0 2px, transparent 2px 5px);
}

/* toolbar */
.toolbar {
  display: flex;
  flex: none;
  flex-direction: column;
  width: 100px;
  border-right: 4px solid #434343;
  border-left: 3px solid #434343;
}
.left {
  justify-content: flex-start;
  padding-left: 12px;
}
.tool-body {
  flex: 1;
  border-top: 2px solid #383838;
  border-right: 1px solid #383838;
}
.tools {
  margin-top: 24px;
}
.tool {
  position: relative;
  width: 80px;
  height: 65px;
  margin-left: 7px;
  border: 2px solid transparent;
  border-radius: 6px;
  color: #dcdcdc;
}
.tool.active {
  border-color: #656565;
  background: #363636;
}
.corner {
  position: absolute;
  right: 7px;
  bottom: 8px;
  width: 8px;
  height: 8px;
  background: linear-gradient(135deg, transparent 50%, #bdbdbd 50%);
}
.color-reset {
  display: flex;
  gap: 17px;
  margin: 14px 0 0 10px;
}
.colors {
  position: relative;
  width: 75px;
  height: 75px;
  margin: 12px 0 0 8px;
}
.fg-color,
.bg-color {
  position: absolute;
  width: 50px;
  height: 50px;
  border: 3px solid #383838;
}
.fg-color {
  top: 0;
  left: 0;
  background: #000;
  box-shadow: inset 0 0 0 3px #fff;
}
.bg-color {
  right: 0;
  bottom: 0;
  background: #fff;
}
.mode {
  position: relative;
  width: 80px;
  height: 50px;
  margin: 19px 0 0 7px;
}
.mode + .mode {
  margin-top: 14px;
}
.mode .corner {
  right: 9px;
  bottom: 0;
}

/* dock */
.dock {
  display: flex;
  flex: none;
  flex-direction: column;
  width: 890px;
  border-right: 2px solid #454545;
  border-left: 4px solid #3e3e3e;
}
.dock-head {
  display: flex;
  background: #424242;
  border-bottom: 2px solid #383838;
}
.dock-head .collapse {
  justify-content: flex-end;
  padding-right: 12px;
}
.head-strip {
  width: 94px;
}
.dock-head .head-panels {
  flex: 1;
  padding-right: 18px;
}
.dock-body {
  display: flex;
  flex: 1;
  min-height: 0;
}
.strip {
  width: 94px;
  color: #dcdcdc;
}
.strip-group {
  height: 173px;
  overflow: hidden;
  border-bottom: 3px solid #3c3c3c;
}
.strip-group.single {
  height: 103px;
}
.strip-group .grip-h {
  margin-bottom: 18px;
}
.strip-group button {
  width: 100%;
  height: 50px;
  padding-left: 5px;
}
.strip-group .spaced {
  margin-top: 17px;
}
.panels {
  display: flex;
  flex: 1;
  flex-direction: column;
  gap: 3px;
  border-right: 6px double #393939;
  border-left: 6px double #393939;
  background: #484848;
}
.panel {
  background: #535353;
  border-bottom: 2px solid #383838;
}
.panel + .panel {
  border-top: 2px solid #383838;
}
.panel.layers {
  display: flex;
  flex: 1;
  flex-direction: column;
  min-height: 0;
  border-bottom: 0;
}
.tabs {
  display: flex;
  flex: none;
  height: 70px;
  font-size: 20px;
  font-weight: 700;
}
.tab {
  padding: 4px 31px 0 23px;
  border-right: 2px solid #383838;
  border-bottom: 2px solid #383838;
  background: #424242;
  color: #a0a0a0;
}
.tab.on {
  padding-top: 2px;
  border-bottom: 0;
  background: #535353;
  color: #fff;
}
.tab-fill {
  flex: 1;
  justify-content: flex-end;
  padding: 0 16px 0 0;
  border-bottom: 2px solid #383838;
  background: #424242;
}
.burger {
  width: 25px;
  height: 18px;
  background: repeating-linear-gradient(#a8a8a8 0 3px, transparent 3px 5px);
}
.recent {
  display: grid;
  grid-template-columns: repeat(15, 1fr);
  gap: 4px;
  width: 662px;
  height: 48px;
  margin: 20px 0 27px 10px;
  padding: 3px 22px 3px 3px;
  border: 2px solid #464646;
}
.swatch-area {
  display: flex;
  height: 387px;
  overflow: hidden;
  border-top: 2px solid #474747;
  border-bottom: 4px solid #434343;
  background: #4d4d4d;
}
.swatches {
  display: grid;
  grid-template-columns: repeat(14, 40px);
  grid-auto-rows: 40px;
  gap: 5px;
  align-content: start;
  padding: 4px 2px 0 3px;
  background: #484848;
}
.scroller {
  display: flex;
  flex-direction: column;
  align-items: center;
  justify-content: space-between;
  width: 42px;
  margin-left: auto;
  padding: 21px 0;
  background: #4a4a4a;
  color: #adadad;
}
.thumb {
  width: 30px;
  height: 282px;
  margin-bottom: 14px;
  background: #676767;
}
.panel-foot {
  display: flex;
  flex: none;
  justify-content: flex-end;
  gap: 4px;
  height: 59px;
  padding-right: 51px;
  color: #949494;
}
.panel-foot button {
  position: relative;
  width: 68px;
}
.panel-foot .bright {
  color: #dcdcdc;
}
.layer-foot {
  gap: 0;
}
.drop {
  position: absolute;
  right: 10px;
  bottom: 9px;
  border: 5px solid transparent;
  border-top-color: #757575;
  border-bottom: 0;
}
.props-title {
  height: 85px;
  margin: 0;
  padding: 29px 0 0 23px;
  border-bottom: 3px solid #404040;
  color: #dcdcdc;
  font-size: 22px;
  font-weight: 700;
  line-height: 28px;
}
.props-body {
  display: flex;
  height: 519px;
}
.track {
  width: 42px;
  height: 458px;
  margin-left: auto;
  background: #4d4d4d;
}
.row {
  display: flex;
  flex: none;
  align-items: flex-start;
  padding: 14px 73px 0 9px;
  border-bottom: 3px solid #424242;
  color: #8c8c8c;
}
.muted {
  height: 46px;
  border-color: #5e5e5e;
  background: #4d4d4d;
}
.row .chev {
  color: #727272;
}
.filter-row {
  height: 81px;
  padding-top: 25px;
}
.blend-row {
  height: 70px;
}
.lock-row {
  height: 74px;
  border-bottom: 2px solid #4a4a4a;
}
.select-kind {
  width: 205px;
}
.select-kind .lens {
  position: absolute;
  left: 20px;
}
.select-kind select {
  padding-left: 54px;
}
.select-blend {
  width: 340px;
}
.kinds,
.locks {
  display: flex;
  color: #9b9b9b;
}
.kinds {
  margin-left: 37px;
}
.kinds button {
  width: 60px;
  height: 42px;
}
.locks button {
  width: 55px;
  height: 40px;
}
.lock-label {
  width: 96px;
  margin: 5px 0 0 7px;
}
.switch {
  align-items: flex-start;
  width: 24px;
  height: 44px;
  margin-left: auto;
  border: 2px solid #5c5c5c;
  border-radius: 12px;
  background: #4d4d4d;
}
.switch i {
  width: 20px;
  height: 20px;
  border-radius: 50%;
  background: #9b9b9b;
}
.amount {
  display: flex;
  gap: 11px;
  margin-left: auto;
}
.amount label {
  margin-top: 5px;
}
.amount-box {
  display: flex;
  width: 132px;
  height: 40px;
  border: 2px solid #5e5e5e;
  border-radius: 5px;
  background: #4d4d4d;
}
.amount-box input {
  flex: 1;
  min-width: 0;
}
.amount-box button {
  width: 40px;
  padding-top: 4px;
  border-left: 2px solid #5e5e5e;
}
.layer-list {
  display: flex;
  flex: 1;
  min-height: 0;
  border-bottom: 4px solid #404040;
  background: #4e4e4e;
}
.layer-list .track {
  height: 100%;
  background: #4b4b4b;
}

/* taskbar */
.taskbar {
  display: flex;
  flex: none;
  align-items: flex-start;
  height: 38px;
  overflow: hidden;
  background: #000;
}
.start {
  width: 120px;
  padding-top: 30px;
}
.search {
  display: flex;
  flex: none;
  align-items: flex-start;
  width: 860px;
  height: 98px;
  padding: 18px 42px 0 27px;
  border-top: 1px solid #bbb;
  background: #f0f0f0;
}
.search input {
  flex: 1;
  height: 46px;
  margin: 8px 0 0 30px;
  color: #333;
  font-size: 34px;
  line-height: 46px;
}
.search input::placeholder {
  color: #333;
}
.mic {
  margin-top: 11px;
}
.apps {
  display: flex;
}
.apps button {
  align-items: flex-start;
  width: 124px;
  height: 98px;
  padding-top: 20px;
}
.apps .current {
  width: 121px;
  margin-left: 3px;
  background: #333;
}
.tray {
  display: flex;
  align-items: flex-start;
  margin-left: auto;
  color: #fff;
  font-size: 28px;
  line-height: 38px;
}
.tray > svg:first-child {
  margin: 10px 83px 0 0;
}
.tray time {
  margin-top: 9px;
}
.note {
  margin: 30px 50px 0 83px;
}
.show-desktop {
  width: 12px;
  height: 98px;
  border-left: 2px solid #6a6a6a;
}
</style>
